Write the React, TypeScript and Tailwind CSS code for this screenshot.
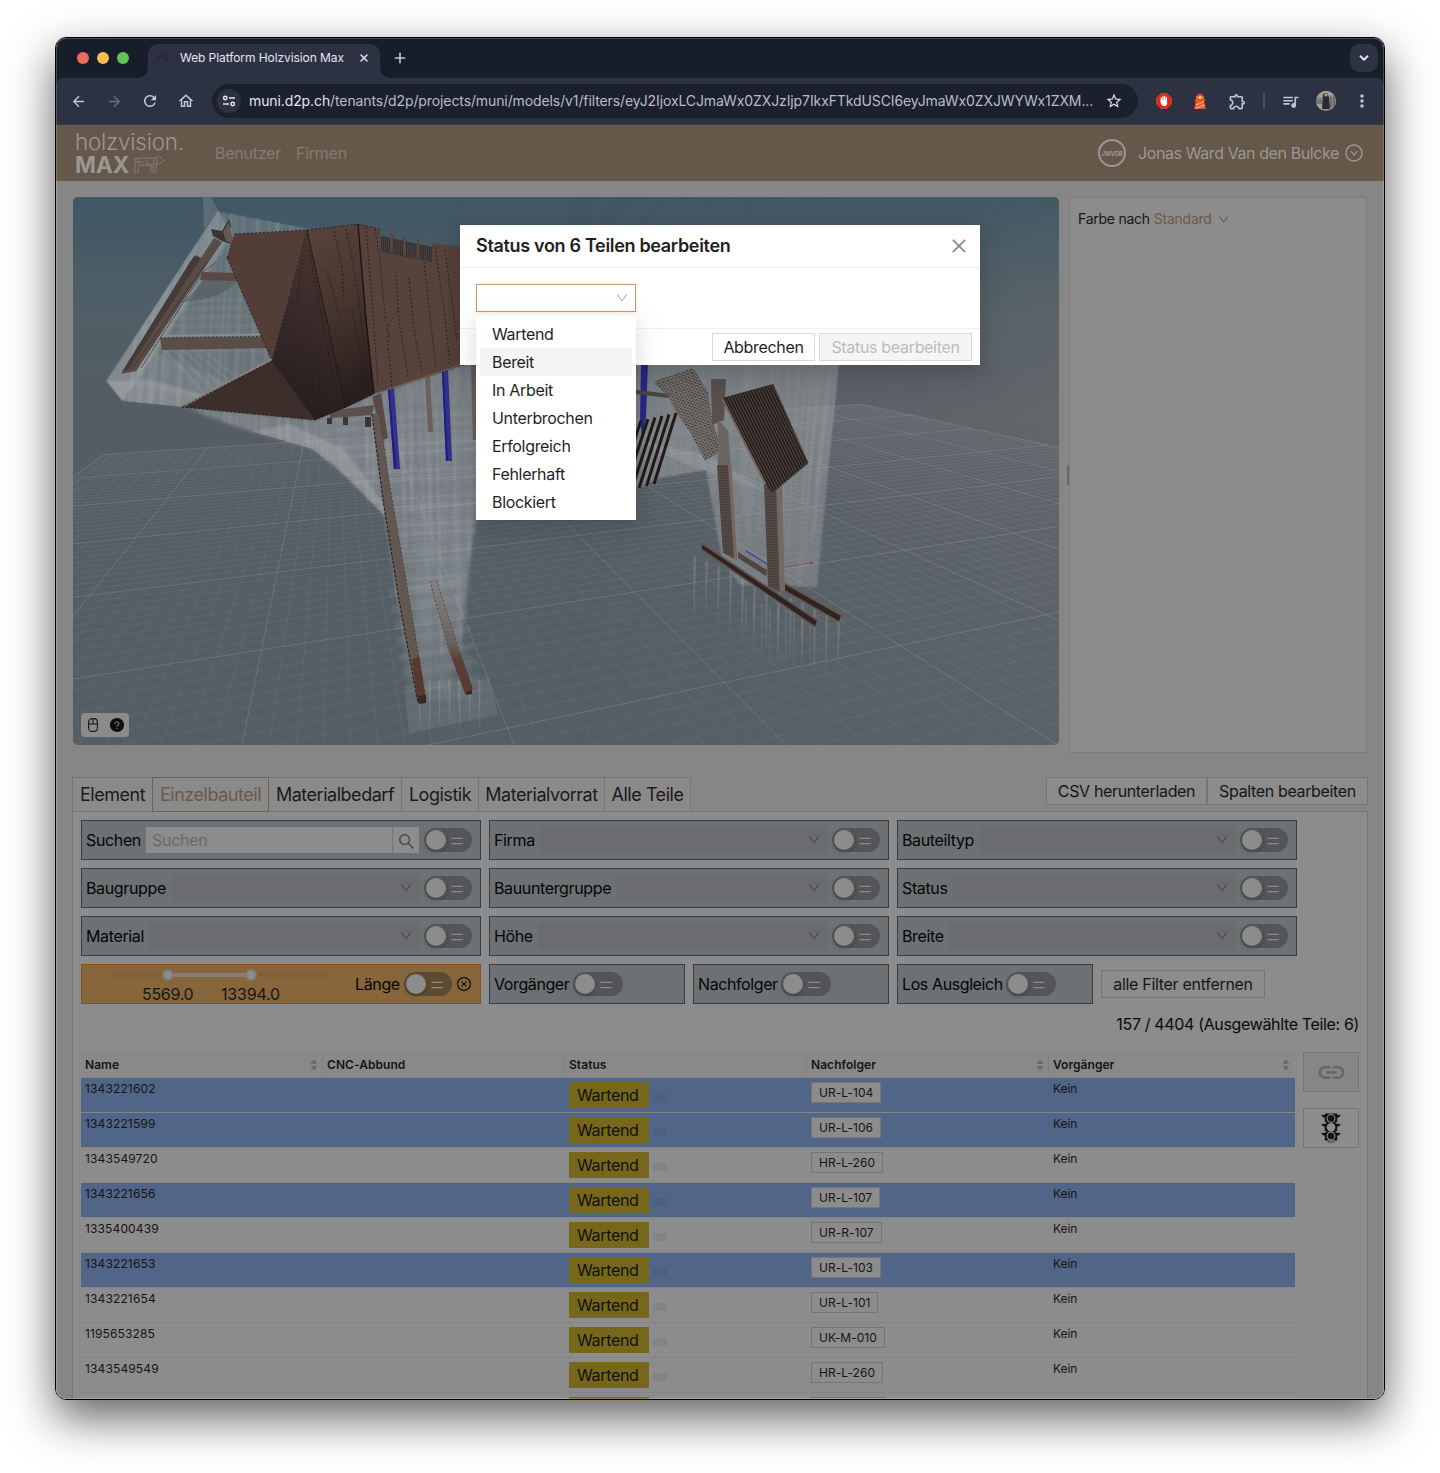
import React from "react";
import {
  MdArrowBack,
  MdArrowForward,
  MdRefresh,
  MdOutlineHome,
  MdStarOutline,
  MdOutlineExtension,
  MdQueueMusic,
  MdMoreVert,
  MdLink,
} from "react-icons/md";
import { AiOutlineDown, AiOutlineClose, AiOutlineSearch, AiOutlineCloseCircle, AiOutlineDownCircle, AiFillQuestionCircle } from "react-icons/ai";
import { X, Plus, ChevronDown } from "lucide-react";

/* ---------- 3D scene ---------- */

const HORIZON = 289;
const VP1 = { x: 2590, y: HORIZON };
const VP2 = { x: 335, y: HORIZON };

type Line = { x1: number; y1: number; x2: number; y2: number; major: boolean };

// point of ground plane: j along the first axis, k along the second
function ground(j: number, k: number) {
  const m2 = (-30 + 272 * j - VP2.x) / (745 - VP2.y);
  const y73 = 1 / (0.002564 + 0.00068 * k);
  const m1 = y73 / (73 - VP1.x);
  // y = H + m1 (x - VP1.x), x = VP2.x + m2 (y - H)
  const dy = (m1 * (VP2.x - VP1.x)) / (1 - m1 * m2);
  return { x: VP2.x + m2 * dy, y: HORIZON + dy };
}

function gridLines(): Line[] {
  const lines: Line[] = [];
  for (let i = -10; i <= 90; i++) {
    const a = ground(i / 10, 5);
    const m2 = (-30 + 27.2 * i - VP2.x) / (745 - VP2.y);
    lines.push({ x1: a.x, y1: a.y, x2: VP2.x + m2 * 520, y2: HORIZON + 520, major: i % 10 === 0 });
  }
  for (let i = -28; i <= 50; i++) {
    const k = i / 10;
    const y73 = 1 / (0.002564 + 0.00068 * k);
    const m1 = y73 / (73 - VP1.x);
    const a = ground(-1, k);
    const startX = a.y > 800 || a.x < -200 || a.y < HORIZON ? -200 : a.x;
    const b = ground(9, k);
    const endX = b.x > 1300 || b.x < 335 ? 1300 : b.x;
    lines.push({
      x1: startX,
      y1: HORIZON + m1 * (startX - VP1.x),
      x2: endX,
      y2: HORIZON + m1 * (endX - VP1.x),
      major: i % 10 === 0,
    });
  }
  return lines;
}

const GRID = gridLines();

function rnd(i: number) {
  const s = Math.sin(i * 127.1 + 11.7) * 43758.5453;
  return s - Math.floor(s);
}

const range = (n: number) => Array.from({ length: n }, (_, i) => i);

function Scene() {
  return (
    <svg className="block h-full w-full" viewBox="73 197 986 548" preserveAspectRatio="none">
      <defs>
        <linearGradient id="sky" x1="0" y1="0" x2="0" y2="1">
          <stop offset="0" stopColor="#405764" />
          <stop offset="0.22" stopColor="#515f67" />
          <stop offset="0.45" stopColor="#565c63" />
          <stop offset="1" stopColor="#535c62" />
        </linearGradient>
        <linearGradient id="skyR" x1="0" y1="0" x2="1" y2="0">
          <stop offset="0.5" stopColor="#6a6d6d" stopOpacity="0" />
          <stop offset="1" stopColor="#6a6d6d" stopOpacity="0.6" />
        </linearGradient>
        <linearGradient id="fadeR" x1="0" y1="0" x2="0" y2="1">
          <stop offset="0" stopColor="#fff" stopOpacity="0.15" />
          <stop offset="0.4" stopColor="#fff" stopOpacity="1" />
          <stop offset="1" stopColor="#fff" stopOpacity="0.7" />
        </linearGradient>
        <mask id="skyMask">
          <rect x="73" y="197" width="986" height="548" fill="url(#fadeR)" />
        </mask>
        <filter id="soft" x="-5%" y="-5%" width="110%" height="110%">
          <feGaussianBlur stdDeviation="0.9" />
        </filter>
        <filter id="softer" x="-5%" y="-5%" width="110%" height="110%">
          <feGaussianBlur stdDeviation="2" />
        </filter>
        <linearGradient id="throat" x1="0.6" y1="0" x2="0.4" y2="1">
          <stop offset="0" stopColor="#49362f" />
          <stop offset="0.5" stopColor="#38292a" />
          <stop offset="1" stopColor="#271d1b" />
        </linearGradient>
        <linearGradient id="side" x1="0" y1="0" x2="0.2" y2="1">
          <stop offset="0" stopColor="#5a433a" />
          <stop offset="0.5" stopColor="#48362f" />
          <stop offset="1" stopColor="#2a1f1d" />
        </linearGradient>
        <linearGradient id="legFade" x1="0" y1="0" x2="0" y2="1">
          <stop offset="0" stopColor="#81827f" />
          <stop offset="0.55" stopColor="#6d625d" />
          <stop offset="0.7" stopColor="#5b3f36" />
          <stop offset="1" stopColor="#583c33" />
        </linearGradient>
        <linearGradient id="ghostDown" x1="0" y1="0" x2="0" y2="1">
          <stop offset="0" stopColor="#b7bcbc" stopOpacity="0.36" />
          <stop offset="0.7" stopColor="#b7bcbc" stopOpacity="0.3" />
          <stop offset="1" stopColor="#b7bcbc" stopOpacity="0.1" />
        </linearGradient>
        <pattern id="roof" width="2.8" height="9" patternUnits="userSpaceOnUse" patternTransform="rotate(-27)">
          <rect width="2.8" height="9" fill="#221b19" />
          <rect width="1.1" height="9" fill="#554640" />
        </pattern>
        <pattern id="mottle" width="4.3" height="3.4" patternUnits="userSpaceOnUse" patternTransform="rotate(-18)">
          <rect width="4.3" height="3.4" fill="#77716e" />
          <rect width="2.2" height="1.2" fill="#2c2624" />
          <rect x="2.4" y="1.7" width="1.5" height="1.2" fill="#332b28" />
        </pattern>
        <pattern id="post" width="6" height="2" patternUnits="userSpaceOnUse">
          <rect width="6" height="2" fill="#554b47" />
          <rect width="6" height="0.8" fill="#463d39" />
        </pattern>
        <clipPath id="clipHead">
          <path d="M218 210 L310 229 L272 361 L182 407 L122 401 L106 381 Z" />
        </clipPath>
        <clipPath id="clipBelly">
          <path d="M184 407 L315 420 L374 394 L470 362 L636 362 L636 430 L560 445 L520 470 L476 520 L470 560 L462 640 L497 705 L410 732 L398 610 L383 515 L345 476 L312 449 L240 428 Z" />
        </clipPath>
        <clipPath id="clipHind">
          <path d="M636 362 L839 362 L828 470 L817 587 L740 585 L722 560 L706 470 L660 478 L636 488 Z" />
        </clipPath>
      </defs>

      <rect x="73" y="197" width="986" height="548" fill="url(#sky)" />
      <rect x="73" y="197" width="986" height="548" fill="url(#skyR)" mask="url(#skyMask)" />

      {/* ground */}
      <path d="M-200 620 L112 453 L850 405 L1300 503 L1300 800 L-200 800 Z" fill="#56636a" opacity="0.3" />
      {GRID.map((l, i) => (
        <line
          key={i}
          x1={l.x1}
          y1={l.y1}
          x2={l.x2}
          y2={l.y2}
          stroke="#c8d0d2"
          strokeOpacity={l.major ? 0.19 : 0.08}
          strokeWidth={1}
        />
      ))}

      {/* translucent head */}
      <path d="M203 197 L211 197 L219 212 L310 229 L272 361 L182 407 L122 401 L106 381 L218 210 L204 230 Z" fill="#b7bcbc" fillOpacity="0.22" />
      <g clipPath="url(#clipHead)">
        <g filter="url(#soft)">
          <path d="M218 210 L106 381 L122 401 L136 382 L232 236 Z" fill="#b9bdbd" fillOpacity="0.32" />
          <path d="M106 381 L122 401 L182 407 L205 395 L150 380 Z" fill="#b9bdbd" fillOpacity="0.3" />
          <path d="M150 350 L250 392 L205 400 L130 384 Z" fill="#b9bdbd" fillOpacity="0.14" />
          {range(26).map((i) => (
            <line
              key={i}
              x1={140 + i * 6 + rnd(i) * 8}
              y1={210}
              x2={124 + i * 6.5 + rnd(i + 50) * 8}
              y2={408}
              stroke="#c3c8c8"
              strokeOpacity={0.06 + rnd(i + 90) * 0.14}
              strokeWidth={1 + rnd(i + 7) * 3}
            />
          ))}
          {range(7).map((i) => (
            <line key={i} x1={140} y1={302 + i * 8} x2={300} y2={298 + i * 9} stroke="#c3c8c8" strokeOpacity="0.14" strokeWidth="1.6" />
          ))}
          {range(5).map((i) => (
            <line key={i} x1={160 + i * 9} y1={345} x2={215 + i * 14} y2={405} stroke="#c3c8c8" strokeOpacity="0.16" strokeWidth="2" />
          ))}
        </g>
        <path d="M182 302 Q198 292 206 272 L236 282 Q220 300 182 302 Z" fill="#515a5e" fillOpacity="0.6" />
      </g>

      {/* translucent belly and fore legs */}
      <path
        d="M184 407 L315 420 L374 394 L470 362 L636 362 L636 430 L560 445 L520 470 L476 520 L470 560 L462 640 L450 690 L408 690 L400 610 L385 515 L347 476 L314 449 L240 428 Z"
        fill="url(#ghostDown)"
        filter="url(#softer)"
      />
      <g clipPath="url(#clipBelly)">
        <g filter="url(#soft)">
          {range(110).map((i) => (
            <line
              key={i}
              x1={200 + i * 4}
              y1={365 + rnd(i) * 40}
              x2={205 + i * 4 + (rnd(i + 3) - 0.5) * 16}
              y2={450 + rnd(i + 20) * 230}
              stroke="#c3c8c8"
              strokeOpacity={0.05 + rnd(i + 200) * 0.18}
              strokeWidth={1 + rnd(i + 7) * 2}
            />
          ))}
          {range(22).map((i) => (
            <line
              key={i}
              x1={330}
              y1={412 + i * 9}
              x2={600}
              y2={398 + i * 9}
              stroke={i % 3 ? "#c3c8c8" : "#53606a"}
              strokeOpacity={0.12 + rnd(i) * 0.14}
              strokeWidth={1.5}
            />
          ))}
          {range(14).map((i) => (
            <line
              key={i}
              x1={417 + i * 4}
              y1={500}
              x2={418 + i * 4}
              y2={700}
              stroke="#c3c8c8"
              strokeOpacity={0.06 + rnd(i + 31) * 0.16}
              strokeWidth={2.5}
            />
          ))}
          <path d="M290 424 L345 450 L392 515 L383 515 L330 462 L250 432 Z" fill="#b9bdbd" fillOpacity="0.3" />
        </g>
      </g>
      {range(7).map((i) => (
        <path
          key={i}
          d={`M${389 + i * 2.5} ${590 + i * 16} L${462 + i * 3} ${578 + i * 16} L${462 + i * 3} ${585 + i * 16} L${389 + i * 2.5} ${598 + i * 16} Z`}
          fill="#b7bcbc"
          fillOpacity="0.1"
        />
      ))}
      <path d="M405 692 L489 678 L498 714 L409 733 Z" fill="#b7bcbc" fillOpacity="0.14" />
      {range(7).map((i) => (
        <path key={i} d={`M${418 + i * 10} 680 h2.5 l-0.5 ${50 + rnd(i) * 14} Z`} fill="#c3c8c8" fillOpacity="0.2" />
      ))}

      {/* translucent hindquarters */}
      <path
        d="M636 362 L839 362 L828 470 L817 587 L740 585 L722 560 L706 470 L660 478 L636 488 Z"
        fill="#aab0b0"
        fillOpacity="0.36"
        filter="url(#soft)"
      />
      <g clipPath="url(#clipHind)">
        <g filter="url(#soft)">
          {range(70).map((i) => (
            <line
              key={i}
              x1={640 + i * 3}
              y1={362}
              x2={650 + i * 2.6}
              y2={470 + rnd(i) * 130}
              stroke="#c3c8c8"
              strokeOpacity={0.04 + rnd(i + 13) * 0.15}
              strokeWidth={2}
            />
          ))}
          <path d="M636 440 L706 455 L768 492 L700 470 Z" fill="#c3c8c8" fillOpacity="0.18" />
        </g>
      </g>
      {range(13).map((i) => {
        const x = 693 + i * 12;
        const y = 556 + i * 5.2;
        return <path key={i} d={`M${x} ${y} h3.4 l-2.4 ${46 + rnd(i + 4) * 24} Z`} fill="#c3c8c8" fillOpacity="0.17" />;
      })}
      {range(9).map((i) => (
        <path key={i} d={`M${745 + i * 8} ${600 + i * 2} h2 l-1.4 ${44 + rnd(i + 9) * 34} Z`} fill="#c3c8c8" fillOpacity="0.13" />
      ))}

      {/* head timbers */}
      <path d="M211 229 L222 231 L229 219 L231 226 L227 234 L234 245 L222 241 L213 236 Z" fill="#393432" />
      <path d="M223 232 L229 222 L231 232 L235 245 L226 241 Z" fill="#665954" />
      <path d="M214 238 L222 242 L136 371 L121 374 L190 262 L196 255 L201 258 Z" fill="#584b46" />
      <path d="M194 256 L201 258 L128 370 L122 372 Z" fill="#443a37" />
      <path d="M216 262 L203 272 L141 368 M207 262 L131 370" fill="none" stroke="#3a2c28" strokeWidth="0.9" strokeDasharray="2 1" />
      <path d="M202 272 L235 273 L238 281 L200 280 Z" fill="#594843" />
      <path d="M160 338 L262 337 L268 348 L162 350 Z" fill="#5a4d49" />
      <path d="M163 336 L262 334.500" stroke="#8c8c8a" strokeWidth="1.6" />
      <path d="M160 338 L262 336.500" stroke="#2b2422" strokeWidth="0.8" strokeDasharray="2 2" />

      {/* fore body timbers */}
      <path d="M330 411 L374 405 L372 415 L330 418 Z" fill="#5a4f4b" />
      <path d="M327 418 h5 v6 h-5 Z M343 417 h5 v8 h-5 Z M365 417 h6 v10 h-6 Z" fill="#3b3533" />
      <path d="M372 397 L381 393 L388 438 L383 440 Z" fill="#584b46" />
      <path d="M425 377 L430 376 L433 432 L428 432 Z M471 364 L476 364 L477 440 L473 440 Z" fill="#6a605c" />
      <path d="M388 389 L394 387 L400 469 L394 469 Z" fill="#34318a" />
      <path d="M388 389 L389.500 389 L396 469 L394 469 Z" fill="#1d1a86" />
      <path d="M442 371 L448 369 L452 461 L446 461 Z" fill="#34318a" />
      <path d="M442 371 L443.500 371 L448 461 L446 461 Z" fill="#1d1a86" />
      <path d="M641 362 L648 362 L646 418 L642 436 L640 420 Z" fill="#2a278c" />

      {/* fore legs */}
      <path d="M372 414 L379 413 L389 480 L406 580 L426 700 L418 703 L399 600 L383 500 Z" fill="#635752" />
      <path d="M412 660 L419 656 L426 700 L418 703 Z" fill="#59392f" />
      <path d="M372 414 L383 500 L399 600 L418 703" fill="none" stroke="#2a211f" strokeWidth="1.2" strokeDasharray="3 1.500" />
      <path d="M379 413 L389 480 L406 580 L426 700" fill="none" stroke="#3a302c" strokeWidth="0.7" strokeDasharray="2 2" />
      <path d="M418 696 L426 695 L426 703 L419 704 Z M464 687 L472 686 L472 694 L466 695 Z" fill="#352723" />
      <path d="M430 581 L437 581 L459 650 L473 689 L465 693 L449 650 Z" fill="url(#legFade)" />
      <path d="M430 581 L449 650 L465 693 M437 581 L459 650 L472 687" fill="none" stroke="#4a3a34" strokeWidth="0.8" strokeDasharray="2 2" />

      {/* shell */}
      <path d="M235 234 L307 230 L272 361 L227 258 Z" fill="#523e37" />
      <path d="M272 361 L315 420 L182 407 Z" fill="#3c2e2a" />
      <path d="M184 406 L272 358.500" stroke="#8a807b" strokeWidth="1.800" />
      <path d="M307 230 L272 361 L315 420 L345 408 Z" fill="url(#throat)" />
      <path d="M307 230 L358 224 L374 394 L345 408 Z" fill="url(#side)" />
      <path d="M358 224 L380 229 L381 252 L432 262 L432 243 L460 247 L480 250 L480 360 L374 394 Z" fill="#57433b" />
      <path d="M381 236 L432 247 L432 262 L381 252 Z" fill="#35302f" />
      {range(24).map((i) => (
        <line key={i} x1={382.5 + i * 2.1} y1={237 + i * 0.45} x2={382.5 + i * 2.1} y2={252 + i * 0.4} stroke="#4c4745" strokeWidth={0.8} />
      ))}
      <path d="M391.500 233 v20 M404.500 237 v18 M418 240 v18" stroke="#5b473f" strokeWidth="2.6" />
      <g fill="none" stroke="#1f1715" strokeWidth="1" strokeDasharray="2 2" strokeOpacity="0.75">
        <path d="M235 234 L307 230 L358 224 L380 229 M227 258 L235 234 M227 258 L272 361 L315 420 M307 230 L272 361 L182 407" />
        <path d="M307 230 L345 408" />
        <path d="M315 420 L374 394 L460 365" />
        <path d="M182 407 L315 420" />
        <path d="M334 231 L342 268 L344 300 M346 229 L357 285 L364 345 M327 271 L341 322 M352 310 L368 390" />
        <path d="M366 227 L372 300 L378 385 M375 229 L380 260 L392 387" />
        <path d="M396 275 L399 320 L408 377 M409 278 L414 330 L422 372 M424 262 L436 369 M435 247 L444 310 L450 365 M445 250 L457 340" />
        <path d="M398 310 L388 325 L390 340 M303 255 L297 300 M309 250 L330 360 L338 400 M318 352 L320 400" />
      </g>
      <path d="M358 224 L366 320 L374 394" fill="none" stroke="#1a1312" strokeWidth="1.4" />
      <path d="M307 230 L327 320 L345 408" fill="none" stroke="#1f1715" strokeWidth="0.8" />
      <path d="M374 394 L460 365" stroke="#7a6255" strokeWidth="1.200" />

      {/* hind timbers */}
      {range(6).map((i) => (
        <line key={i} x1={676 - i * 7} y1={413 + i * 1.5} x2={654 - i * 7.5} y2={484 + i * 2} stroke="#221a18" strokeWidth="3" />
      ))}
      <path d="M636 390 L672 394 L668 398 L636 394 Z" fill="#4e4643" />
      <path d="M655 381 L693 368 L708 392 L712 420 L722 450 L705 461 L690 432 L676 412 L668 396 L655 384 Z" fill="url(#mottle)" opacity="0.85" />
      <path d="M711 379 L726 379 L724 420 L712 425 Z" fill="#57504d" />
      <path d="M718 420 L728 430 L731 470 L718 470 Z" fill="#6b6562" />
      <path d="M717 465 L730 465 L737 560 L723 553 Z" fill="url(#post)" />
      <path d="M728 465 L731.500 465 L737 560 L734 559 Z" fill="#776763" />
      <path d="M764 484 L777 484 L780 592 L768 586 Z" fill="url(#post)" />
      <path d="M776 486 L782 486 L785 590 L780 593 Z" fill="#776763" />
      <path d="M722 398 L773 384 L808 463 L772 493 L765 482 Z" fill="url(#roof)" />
      <path d="M722 398 L765 483" stroke="#73635d" strokeWidth="2" />
      <path d="M773 384 L808 463 L772 493" fill="none" stroke="#4c3c36" strokeWidth="1.2" strokeDasharray="2 1" />
      <path d="M738 552 L767 570 L766 576 L738 558 Z" fill="#4e4541" />
      <path d="M702 543 L817 620 L815 627 L702 550 Z" fill="#2e2421" />
      <path d="M702 543.500 L817 620 M702 550 L815 627" stroke="#67574f" strokeWidth="1.600" />
      <path d="M785 583 L841 615 L839 622 L785 591 Z" fill="#2e2421" />
      <path d="M785 583.500 L841 615 M785 591 L839 622" stroke="#67574f" strokeWidth="1.600" />
      <path d="M785 567 L811 563" stroke="#8b5752" strokeWidth="1" />
      <circle cx="811.500" cy="563" r="1.500" fill="#8b4b46" />
      <path d="M746 551 L767 564" stroke="#3a3a9c" strokeWidth="1.200" />
    </svg>
  );
}

/* ---------- browser chrome ---------- */

function TabStrip() {
  return (
    <div className="flex h-10 items-end bg-[#181e29]">
      <div className="flex h-10 w-[82px] items-center gap-2 pl-[21px]">
        <span className="size-3 rounded-full bg-[#ed6a5e]" />
        <span className="size-3 rounded-full bg-[#f5bd4f]" />
        <span className="size-3 rounded-full bg-[#61c454]" />
      </div>
      <div className="size-[10px] bg-[radial-gradient(circle_at_0_0,#181e29_9.5px,#2d3243_10px)]" />
      <div className="flex h-[34px] w-[232px] items-center rounded-t-[10px] bg-[#2d3243] pb-[6px] pl-2">
        <Cow className="h-[10px] w-4 text-[#191c25]" />
        <span className="ml-2 w-[164px] whitespace-nowrap text-[12px] tracking-[-0.08px] text-[#e3e5ee]">Web Platform Holzvision Max</span>
        <X className="ml-[14px] size-3 text-[#dfe1ea]" strokeWidth={3} />
      </div>
      <div className="size-[10px] bg-[radial-gradient(circle_at_100%_0,#181e29_9.5px,#2d3243_10px)]" />
      <div className="flex h-10 flex-1 items-center pl-[2px]">
        <Plus className="size-4 text-[#c5c9e0]" strokeWidth={2.4} />
        <div className="mr-[6px] ml-auto flex size-7 items-center justify-center rounded-[9px] bg-[#2d3243]">
          <ChevronDown className="size-[14px] text-[#e3e5ee]" strokeWidth={3.4} />
        </div>
      </div>
    </div>
  );
}

function Toolbar() {
  return (
    <div className="bg-[#181e29]">
      <div className="flex h-[47px] items-center rounded-t-[8px] border-b border-[#373c4c] bg-[#2d3243] text-[#c0c4e0]">
        <div className="flex w-[156px] items-center gap-4 pl-3">
          <span className="flex w-5 justify-center">
            <MdArrowBack className="size-[17px]" />
          </span>
          <span className="flex w-5 justify-center">
            <MdArrowForward className="size-[17px] text-[#6b7083]" />
          </span>
          <span className="flex w-5 justify-center">
            <MdRefresh className="size-[18px]" />
          </span>
          <span className="flex w-5 justify-center">
            <MdOutlineHome className="size-[18px]" />
          </span>
        </div>
        <div className="flex h-[34px] w-[926px] items-center rounded-full bg-[#1b202d] pl-[5px]">
          <div className="flex size-6 items-center justify-center rounded-full bg-[#2d3243]">
            <svg viewBox="0 0 14 14" className="size-[14px]" fill="none" stroke="#e3e5ee" strokeWidth="1.5">
              <circle cx="3.300" cy="4" r="1.700" />
              <path d="M7 4h6M1 10h6" />
              <circle cx="10.700" cy="10" r="1.700" />
            </svg>
          </div>
          <div className="-mt-px ml-2 w-[850px] whitespace-nowrap text-[14px] tracking-[-0.105px] text-[#b9bcc6]">
            <span className="text-[#e3e5ee]">muni.d2p.ch</span>
            /tenants/d2p/projects/muni/models/v1/filters/eyJ2IjoxLCJmaWx0ZXJzIjp7IkxFTkdUSCI6eyJmaWx0ZXJWYWx1ZXM...
          </div>
          <MdStarOutline className="ml-[6px] size-[18px] text-[#dfe1ea]" />
        </div>
        <div className="flex flex-1 items-center">
          <svg viewBox="0 0 16 16" className="ml-[18px] size-4">
            <path d="M5 0h6l5 5v6l-5 5H5l-5-5V5z" fill="#d7301f" />
            <path
              d="M5.300 8.200V5M7 7.500V3.800M8.700 7.500V3.400M10.400 8V4.600"
              stroke="#fff"
              strokeWidth="1.300"
              strokeLinecap="round"
            />
            <path d="M4.650 7h6.400v3.200q0 2.800-2.600 2.800h-1q-1.500 0-2.800-3z" fill="#fff" />
          </svg>
          <svg viewBox="0 0 16 18" className="ml-[20px] h-[18px] w-4">
            <path d="M8 1l4 3v1H4V4z" fill="#e0492a" />
            <rect x="4" y="4" width="8" height="3.500" fill="#f26a2e" />
            <circle cx="8" cy="5.500" r="1.500" fill="#ffe34d" />
            <path d="M2.500 7.500h11V9h-1.300L13.700 17H2.300L3.800 9H2.500z" fill="#f0592f" />
            <path d="M4 12.800l8-3M3.500 16.300l9.500-3.500" stroke="#f9b49a" strokeWidth="1" />
          </svg>
          <MdOutlineExtension className="ml-[20px] size-[19px]" />
          <span className="ml-[16px] h-4 w-[2px] bg-[#474c5e]" />
          <MdQueueMusic className="ml-[16px] size-[19px]" />
          <svg viewBox="0 0 20 20" className="ml-[16px] size-5">
            <clipPath id="ava">
              <circle cx="10" cy="10" r="10" />
            </clipPath>
            <g clipPath="url(#ava)">
              <rect width="20" height="20" fill="#8f8d8b" />
              <rect width="20" height="6" fill="#a9a19b" />
              <path d="M0 8h6v5H0z" fill="#5d7f86" />
              <path d="M0 13h7v7H0z" fill="#a79a96" />
              <path d="M7 3l4-1 2 4 1 12H6z" fill="#2b2a35" />
              <path d="M14 7h6v8h-6z" fill="#8b857e" />
              <path d="M15 4v12M18 4v12" stroke="#55504e" />
              <circle cx="10" cy="4" r="1.600" fill="#c79c86" />
            </g>
          </svg>
          <MdMoreVert className="ml-[16px] size-5" />
        </div>
      </div>
    </div>
  );
}

function Cow({ className }: { className?: string }) {
  return (
    <svg viewBox="0 0 32 18" className={className} fill="none" stroke="currentColor" strokeWidth="0.800" strokeDasharray="1.600 0.800">
      <path d="M1 3l5-1h16l3-1.500 3 1 3 3-4 3-3-.5-1 4v5h-3v-6l-9-1-5 1-1 3v4H2v-5l1-4z" />
      <path d="M6 3v6M14 2v8M21 2v7M3 6h8M15 8h8M24 2v5M18 10v6" />
    </svg>
  );
}

/* ---------- app ---------- */

function AppHeader() {
  return (
    <div className="flex h-14 items-center bg-[#65574a] text-[#9a9793]">
      <div className="flex w-[159px] flex-col pt-px pl-[19px]">
        <span className="h-[22px] text-[22.5px] leading-[20px] font-light tracking-[-0.25px]">holzvision.</span>
        <div className="flex h-[22px] items-center">
          <span className="w-[55px] text-[22.5px] leading-[22px] font-bold">MAX</span>
          <Cow className="ml-[3px] h-[18px] w-8" />
        </div>
      </div>
      <div className="flex gap-4 text-[16px] tracking-[-0.25px] text-[#857b72]">
        <span className="w-[65px]">Benutzer</span>
        <span>Firmen</span>
      </div>
      <div className="mr-[20px] ml-auto flex items-center">
        <span className="flex size-7 items-center justify-center rounded-full border-2 border-[#9a9793] text-[6px] font-bold tracking-[-0.3px]">
          JWVDB
        </span>
        <span className="ml-3 whitespace-nowrap text-[16px] tracking-[-0.4px]">Jonas Ward Van den Bulcke</span>
        <AiOutlineDownCircle className="ml-[5px] size-5" />
      </div>
    </div>
  );
}

function Switch({ wide, tone }: { wide?: boolean; tone?: string }) {
  return (
    <span className={`flex h-6 shrink-0 items-center rounded-full pl-[2px] ${wide ? "w-[50px]" : "w-12"} ${tone ?? "bg-[#545558]"}`}>
      <span className="size-5 rounded-full bg-[#8c8c8c] shadow-[0_2px_4px_rgba(0,35,11,0.3)]" />
      <svg viewBox="0 0 12 8" className="mt-px ml-[5px] h-2 w-3" stroke="#8c8c8c" strokeWidth="1.300">
        <path d="M0.500 1.300h11M0.500 6.700h11" />
      </svg>
    </span>
  );
}

function FilterCell({ label }: { label: string }) {
  return (
    <div className="flex h-10 items-center border border-[#383d4a] bg-[#6c7174] pr-2 pl-1">
      <span className="text-[16px] tracking-[-0.36px] text-[#050505]">{label}</span>
      <div className="mr-1 ml-[5px] flex h-7 flex-1 items-center justify-end bg-[#6b6c70] pr-[7px] text-[#4b4c4f]">
        <AiOutlineDown className="size-[14px]" />
      </div>
      <Switch />
    </div>
  );
}

function SmallCell({ label }: { label: string }) {
  return (
    <div className="flex h-10 items-center gap-[3.5px] border border-[#383d4a] bg-[#6c7174] pl-1">
      <span className="whitespace-nowrap text-[16px] tracking-[-0.4px] text-[#050505]">{label}</span>
      <Switch wide />
    </div>
  );
}

function LengthCell() {
  return (
    <div className="flex h-10 items-center border border-[#8a4f1e] bg-[#87663c] pl-[28px]">
      <div className="relative h-10 w-[218px]">
        <div className="absolute top-[9px] left-0 h-1 w-full bg-[#825f37]" />
        <div className="absolute top-[9px] left-[58px] h-1 w-[83px] bg-[#85807a]" />
        <div className="absolute top-[5px] left-[52px] size-3 rounded-full border-2 border-[#7d7a76] bg-[#8c8c8c]" />
        <div className="absolute top-[5px] left-[135px] size-3 rounded-full border-2 border-[#7d7a76] bg-[#8c8c8c]" />
        <span className="absolute top-[18px] left-[32px] text-[16px] leading-6 tracking-[-0.3px] text-[#161616]">5569.0</span>
        <span className="absolute top-[18px] left-[111px] text-[16px] leading-6 tracking-[-0.2px] text-[#161616]">13394.0</span>
      </div>
      <span className="ml-[27px] w-[45px] text-[16px] tracking-[-0.36px] text-[#050505]">Länge</span>
      <div className="ml-[4px]">
        <Switch tone="bg-[#5d4a31]" />
      </div>
      <AiOutlineCloseCircle className="ml-[4px] size-4 text-[#0a0a0a]" />
    </div>
  );
}

function Btn({ className, children }: { className?: string; children: React.ReactNode }) {
  return (
    <div className={`flex items-center justify-center whitespace-nowrap border border-[#757575] text-[16px] text-[#161616] ${className ?? ""}`}>
      {children}
    </div>
  );
}

function TrafficLight() {
  return (
    <svg viewBox="0 0 20 30" className="h-[30px] w-5">
      <path d="M0 2h5v2.500H2.500zM20 2h-5v2.500h2.500zM0 11h5v2.500H2.500zM20 11h-5v2.500h2.500zM0 20h5v2.500H2.500zM20 20h-5v2.500h2.500z" fill="#111" />
      <rect x="3.800" y="0.500" width="12.400" height="27" fill="#111" />
      <rect x="6.500" y="27.500" width="7" height="2.500" fill="#666" />
      <circle cx="10" cy="5.400" r="3.900" fill="#111" stroke="#8c8c8c" strokeWidth="1.100" />
      <circle cx="10" cy="14.200" r="4.300" fill="#8c8c8c" />
      <circle cx="10" cy="23" r="3.900" fill="#111" stroke="#8c8c8c" strokeWidth="1.100" />
      <path d="M3.800 8.500l2.200 1.300-2.200 1.200zM16.200 8.500L14 9.800l2.200 1.200zM3.800 17.500l2.200 1.200-2.200 1.300zM16.200 17.500L14 18.700l2.200 1.300z" fill="#8c8c8c" />
    </svg>
  );
}

const TABS = [
  { label: "Element", cls: "w-20 border-[#757575] text-[#1a1a1a]" },
  { label: "Einzelbauteil", cls: "relative -ml-px w-[117px] border-l border-[#72614f] text-[#6b5b4b]" },
  { label: "Materialbedarf", cls: "w-[133px] border-[#757575] text-[#1a1a1a]" },
  { label: "Logistik", cls: "w-[77px] border-[#757575] text-[#1a1a1a]" },
  { label: "Materialvorrat", cls: "w-[126px] border-[#757575] text-[#1a1a1a]" },
  { label: "Alle Teile", cls: "w-[86px] border-[#757575] text-[#1a1a1a]" },
];

const ROWS = [
  { name: "1343221602", next: "UR-L-104", sel: true },
  { name: "1343221599", next: "UR-L-106", sel: true },
  { name: "1343549720", next: "HR-L-260", sel: false },
  { name: "1343221656", next: "UR-L-107", sel: true },
  { name: "1335400439", next: "UR-R-107", sel: false },
  { name: "1343221653", next: "UR-L-103", sel: true },
  { name: "1343221654", next: "UR-L-101", sel: false },
  { name: "1195653285", next: "UK-M-010", sel: false },
  { name: "1343549549", next: "HR-L-260", sel: false },
];

function Sorter() {
  return (
    <svg viewBox="0 0 8 12" className="ml-auto h-3 w-2" fill="#666">
      <path d="M4 0.500L7.400 4.700H0.600zM4 11.500L7.400 7.300H0.600z" />
    </svg>
  );
}

function HeadCell({ label, sort, last }: { label: string; sort?: boolean; last?: boolean }) {
  return (
    <div className={`flex h-full items-center pl-1 ${last ? "w-[246px] pr-[5px]" : "w-[242px]"}`}>
      <span className="tracking-[0.05px]">{label}</span>
      {sort && <Sorter />}
      {!last && <span className={`h-5 w-px bg-[#828282] ${sort ? "ml-[4px]" : "ml-auto"}`} />}
    </div>
  );
}

function DataTable() {
  return (
    <div className="w-[1214px] text-[12px] text-[#151515]">
      <div className="flex h-[26px] items-center border-b border-[#838383] bg-[#898989] font-semibold">
        <HeadCell label="Name" sort />
        <HeadCell label="CNC-Abbund" />
        <HeadCell label="Status" />
        <HeadCell label="Nachfolger" sort />
        <HeadCell label="Vorgänger" sort last />
      </div>
      {ROWS.map((r, i) => (
        <div key={i} className={`flex h-[35px] items-start border-b border-[#848484] pt-[4px] ${r.sel ? "bg-[#506587]" : ""}`}>
          <span className="-mt-[1px] w-[484px] pl-1 leading-[16px] tracking-[0.13px]">{r.name}</span>
          <div className="flex w-[242px] items-center gap-1 pl-1">
            <span className="flex h-[26px] w-20 items-center bg-[#77671a] pl-2 text-[16px] tracking-[-0.33px] text-[#111]">Wartend</span>
            <span className={`mt-1 h-2 w-[14px] ${r.sel ? "bg-[#4c6083]" : "bg-[#848484]"}`} />
          </div>
          <div className="w-[242px] pl-1">
            <span className="inline-flex h-[21px] items-center border border-[#757575] bg-[#8c8c8c] px-[7px] tracking-[0.03px]">{r.next}</span>
          </div>
          <span className="-mt-[1px] pl-1 leading-[16px] tracking-[-0.1px]">Kein</span>
        </div>
      ))}
      {/* top edge of the row that scrolls out of view */}
      <div className="flex h-[35px] pt-[4px] pl-[488px]">
        <span className="h-[26px] w-20 bg-[#77671a]" />
        <span className="ml-[162px] h-[21px] w-[74px] border border-[#757575]" />
      </div>
    </div>
  );
}

function PartsSection() {
  return (
    <div className="flex min-h-0 flex-1 flex-col pr-4 pl-4">
      <div className="flex h-[34px] items-start">
        <div className="flex h-[35px] border-l border-[#757575]">
          {TABS.map((t) => (
            <div
              key={t.label}
              className={`flex items-center justify-center border-t border-r border-b bg-[#8a8a8a] text-[18px] tracking-[-0.47px] whitespace-nowrap ${t.cls}`}
            >
              {t.label}
            </div>
          ))}
        </div>
        <div className="ml-auto flex">
          <Btn className="h-7 w-[161px] bg-[#8c8c8c] tracking-[-0.35px]">CSV herunterladen</Btn>
          <Btn className="h-7 w-[161px] bg-[#8c8c8c] tracking-[-0.35px]">Spalten bearbeiten</Btn>
        </div>
      </div>
      <div className="min-h-0 flex-1 overflow-hidden border-x border-t border-[#757575] bg-[#8c8c8c] pt-2 pr-2 pl-2">
        <div className="grid w-[1216px] grid-cols-3 gap-2">
          <div className="flex h-10 items-center border border-[#383d4a] bg-[#6c7174] pl-1">
            <span className="w-[60px] text-[16px] tracking-[-0.36px] text-[#050505]">Suchen</span>
            <div className="flex h-[26px] w-[247px] items-center border-r border-[#757575] bg-[#8c8c8c] pl-[6px] text-[16px] tracking-[-0.3px] text-[#6a6a6a]">
              Suchen
            </div>
            <div className="flex h-[26px] w-[26px] items-center justify-center bg-[#8c8c8c] text-[#4a4a4a]">
              <AiOutlineSearch className="mt-[3px] size-[19px]" />
            </div>
            <div className="ml-[5px]">
              <Switch />
            </div>
          </div>
          <FilterCell label="Firma" />
          <FilterCell label="Bauteiltyp" />
          <FilterCell label="Baugruppe" />
          <FilterCell label="Bauuntergruppe" />
          <FilterCell label="Status" />
          <FilterCell label="Material" />
          <FilterCell label="Höhe" />
          <FilterCell label="Breite" />
          <LengthCell />
          <div className="grid grid-cols-2 gap-2">
            <SmallCell label="Vorgänger" />
            <SmallCell label="Nachfolger" />
          </div>
          <div className="grid grid-cols-2 items-center gap-2">
            <SmallCell label="Los Ausgleich" />
            <Btn className="h-7 w-[164px] bg-[#8c8c8c] tracking-[-0.3px]">alle Filter entfernen</Btn>
          </div>
        </div>
        <div className="mt-2 text-right text-[16px] leading-6 tracking-[-0.35px] text-[#0a0a0a]">157 / 4404 (Ausgewählte Teile: 6)</div>
        <div className="mt-4 flex gap-2">
          <DataTable />
          <div className="flex flex-col gap-4">
            <Btn className="h-10 w-14 bg-[#868686]">
              <MdLink className="size-[31px] text-[#666]" />
            </Btn>
            <Btn className="h-10 w-14 bg-[#8c8c8c]">
              <TrafficLight />
            </Btn>
          </div>
        </div>
      </div>
    </div>
  );
}

/* ---------- modal ---------- */

const OPTIONS = ["Wartend", "Bereit", "In Arbeit", "Unterbrochen", "Erfolgreich", "Fehlerhaft", "Blockiert"];

function Modal() {
  return (
    <div className="absolute top-[187px] left-[404px] flex h-[140px] w-[520px] flex-col bg-white shadow-[0_6px_16px_rgba(0,0,0,0.12),0_9px_28px_8px_rgba(0,0,0,0.08)]">
      <div className="flex h-[43px] items-center justify-between border-b border-[#f0f0f0] pr-[11px] pl-4">
        <span className="-mt-px text-[18px] font-semibold tracking-[-0.32px] text-[#1f1f1f]">Status von 6 Teilen bearbeiten</span>
        <AiOutlineClose className="size-5 text-[#858585]" />
      </div>
      <div className="h-[61px] border-b border-[#f0f0f0] pt-4 pl-4">
        <div className="relative flex h-7 w-40 items-center justify-end border border-[#b99b80] bg-white pr-[6px] shadow-[0_0_0_2px_rgba(255,240,225,0.6)]">
          <AiOutlineDown className="size-[14px] text-[#b8b8b8]" />
          <div className="absolute top-[31px] -left-px w-40 bg-white p-1 text-[16px] tracking-[-0.33px] text-[#1f1f1f] shadow-[0_6px_16px_rgba(0,0,0,0.08),0_3px_6px_-4px_rgba(0,0,0,0.12),0_9px_28px_8px_rgba(0,0,0,0.05)]">
            {OPTIONS.map((o, i) => (
              <div key={o} className={`flex h-7 items-center pl-3 ${i === 1 ? "bg-[#f4f4f4]" : ""}`}>
                {o}
              </div>
            ))}
          </div>
        </div>
      </div>
      <div className="flex flex-1 items-center justify-end gap-1 pr-2 text-[16px] tracking-[-0.32px]">
        <div className="flex h-7 w-[103px] items-center justify-center border border-[#d9d9d9] text-[#1f1f1f]">Abbrechen</div>
        <div className="flex h-7 w-[153px] items-center justify-center border border-[#d9d9d9] bg-[#f5f5f5] whitespace-nowrap text-[#bcbcbc]">
          Status bearbeiten
        </div>
      </div>
    </div>
  );
}

export default function App() {
  return (
    <div className="h-[1473px] w-[1440px] overflow-hidden bg-white pt-[37px] pl-[55px] font-['Inter',sans-serif]">
      <div className="h-[1363px] w-[1330px] rounded-[11px] border border-black shadow-[0_18px_46px_rgba(0,0,0,0.62)]">
        <div className="relative flex h-full flex-col overflow-hidden rounded-[10px] bg-[#868686]">
          <TabStrip />
          <Toolbar />
          <AppHeader />
          <div className="flex h-[596px] pt-4 pl-[17px]">
            <div className="relative h-[548px] w-[986px] overflow-hidden rounded-[5px]">
              <Scene />
              <div className="absolute bottom-2 left-2 flex h-6 w-12 items-center rounded-[4px] bg-[#8b8b8b] pl-[7px]">
                <svg viewBox="0 0 10 14" className="h-[14px] w-[10px]" fill="none" stroke="#161616" strokeWidth="1.100">
                  <rect x="0.600" y="0.600" width="8.800" height="12.800" rx="3.500" />
                  <path d="M0.600 6h8.800M5 0.600V6" />
                </svg>
                <AiFillQuestionCircle className="ml-[11px] size-4 text-[#0d0d0d]" />
              </div>
            </div>
            <div className="flex w-[10px] items-start justify-end pt-[268px]">
              <span className="h-5 w-[2px] bg-[#6a6a6a]" />
            </div>
            <div className="h-[556px] w-[298px] border border-[#7b7b7b] bg-[#8c8c8c]">
              <div className="flex items-center pt-[11px] pl-2 text-[14px] leading-5 tracking-[-0.25px] text-[#161616]">
                <span>Farbe nach</span>
                <span className="ml-1 text-[#6b5b4b]">Standard</span>
                <AiOutlineDown className="ml-[5px] size-[13px] text-[#6b5b4b]" />
              </div>
            </div>
          </div>
          <PartsSection />
          <Modal />
          <div className="pointer-events-none absolute inset-0 rounded-[10px] border border-white/20" />
        </div>
      </div>
    </div>
  );
}
